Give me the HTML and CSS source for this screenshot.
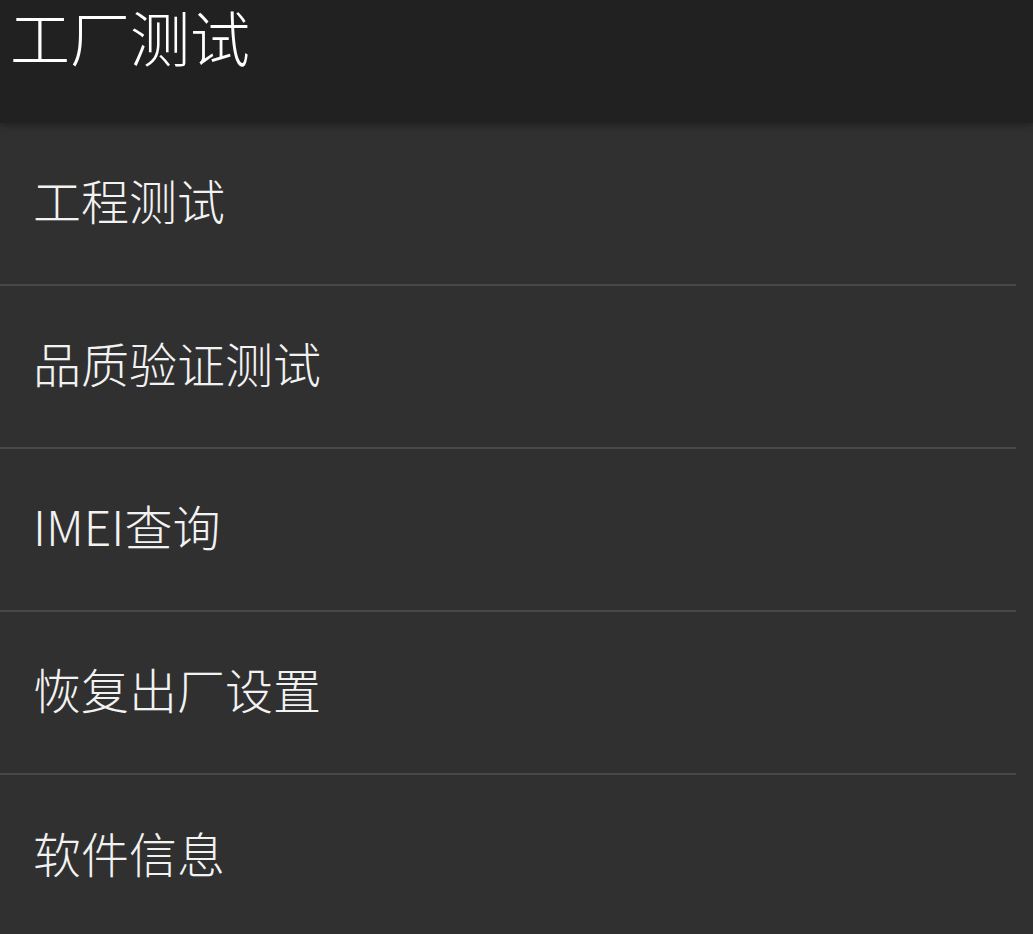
FILE: index.html
```html
<!DOCTYPE html>
<html lang="zh-CN">
<head>
<meta charset="utf-8">
<title>工厂测试</title>
<link rel="stylesheet" href="styles.css">
</head>
<body>
<header class="app-bar">
  <h1 class="app-title">工厂测试</h1>
</header>
<ul class="menu">
  <li class="menu-item">工程测试</li>
  <li class="menu-item">品质验证测试</li>
  <li class="menu-item">IMEI查询</li>
  <li class="menu-item">恢复出厂设置</li>
  <li class="menu-item">软件信息</li>
</ul>
</body>
</html>
```
FILE: styles.css
```css
html, body {
  margin: 0;
  padding: 0;
  background: #303030;
  height: 100%;
  overflow: hidden;
}
body {
  font-family: "Noto Sans CJK SC", "Noto Sans", sans-serif;
  color: #f2f2f2;
}
.app-bar {
  position: relative;
  box-sizing: border-box;
  height: 123px;
  padding: 6px 0 0 10px;
  background: #212121;
  box-shadow: 0 2px 8px rgba(0, 0, 0, 0.35);
  z-index: 1;
}
.app-title {
  margin: 0;
  font-size: 60px;
  font-weight: 300;
  line-height: 60px;
  color: #ffffff;
}
.menu {
  list-style: none;
  margin: 0;
  padding: 0;
}
.menu-item {
  display: flex;
  align-items: center;
  box-sizing: border-box;
  height: 163px;
  padding-left: 33px;
  padding-bottom: 10px;
  margin-right: 17px;
  font-size: 48px;
  font-weight: 300;
  line-height: 1;
  border-bottom: 2px solid #484848;
}
.menu-item:last-child {
  border-bottom: none;
}
```
